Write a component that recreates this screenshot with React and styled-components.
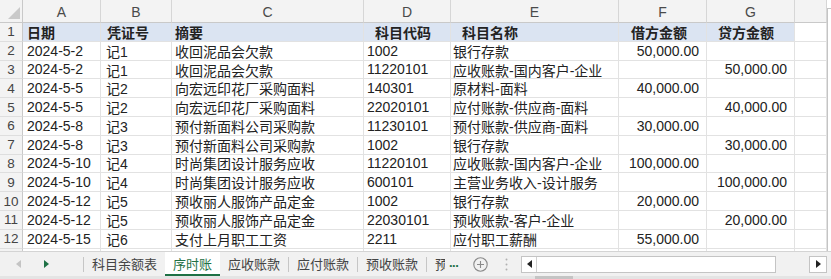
import React from "react";
import styled, { createGlobalStyle } from "styled-components";

const GlobalStyle = createGlobalStyle`
  html, body {
    margin: 0;
    padding: 0;
    background: #fff;
  }
  body {
    font-family: "Liberation Sans", "Noto Sans CJK SC", sans-serif;
    overflow: hidden;
  }
  * {
    box-sizing: border-box;
  }
`;

const COLS = ["A", "B", "C", "D", "E", "F", "G", ""];

const ROWS = [
  ["日期", "凭证号", "摘要", "科目代码", "科目名称", "借方金额", "贷方金额"],
  ["2024-5-2", "记1", "收回泥品会欠款", "1002", "银行存款", "50,000.00", ""],
  ["2024-5-2", "记1", "收回泥品会欠款", "11220101", "应收账款-国内客户-企业", "", "50,000.00"],
  ["2024-5-5", "记2", "向宏远印花厂采购面料", "140301", "原材料-面料", "40,000.00", ""],
  ["2024-5-5", "记2", "向宏远印花厂采购面料", "22020101", "应付账款-供应商-面料", "", "40,000.00"],
  ["2024-5-8", "记3", "预付新面料公司采购款", "11230101", "预付账款-供应商-面料", "30,000.00", ""],
  ["2024-5-8", "记3", "预付新面料公司采购款", "1002", "银行存款", "", "30,000.00"],
  ["2024-5-10", "记4", "时尚集团设计服务应收", "11220101", "应收账款-国内客户-企业", "100,000.00", ""],
  ["2024-5-10", "记4", "时尚集团设计服务应收", "600101", "主营业务收入-设计服务", "", "100,000.00"],
  ["2024-5-12", "记5", "预收丽人服饰产品定金", "1002", "银行存款", "20,000.00", ""],
  ["2024-5-12", "记5", "预收丽人服饰产品定金", "22030101", "预收账款-客户-企业", "", "20,000.00"],
  ["2024-5-15", "记6", "支付上月职工工资", "2211", "应付职工薪酬", "55,000.00", ""],
  ["", "", "", "", "", "", ""],
];

const HEAD_INDENT = [4, 6, 3, 11, 11, 12, 11];
const BODY_INDENT = [4, 5, 3, 3, 2];

// last tab is only partly visible in the strip
const TABS = ["科目余额表", "序时账", "应收账款", "应付账款", "预收账款", "预"];

const Sheet = styled.div`
  display: flex;
  flex-direction: column;
  width: 831px;
  height: 279px;
  overflow: hidden;
`;

const GridArea = styled.div`
  display: flex;
  height: 251px;
  overflow: hidden;
`;

const Grid = styled.div`
  display: grid;
  grid-template-columns: 23px 78px 71px 192px 87px 168px 88px 88px 32px;
  grid-template-rows: 23px;
  grid-auto-rows: 18.8px;
  width: 827px;
  align-content: start;
`;

const Corner = styled.div`
  display: flex;
  align-items: flex-end;
  justify-content: flex-end;
  padding: 0 2px 3px 0;
  background: #f3f3f3;
  border-right: 1px solid #c9c9c9;
  border-bottom: 1px solid #c9c9c9;
`;

const ColHead = styled.div`
  display: flex;
  align-items: center;
  justify-content: center;
  background: #f3f3f3;
  border-right: 1px solid #d6d6d6;
  border-bottom: 1px solid #c9c9c9;
  color: #4a4a4a;
  font-size: 14px;
  padding-top: 2px;
`;

const RowHead = styled.div`
  display: flex;
  align-items: center;
  justify-content: center;
  background: #f3f3f3;
  border-right: 1px solid #c9c9c9;
  border-bottom: 1px solid #dedede;
  color: #444;
  font-size: 13.5px;
`;

const Cell = styled.div`
  display: flex;
  align-items: center;
  justify-content: ${(p) => (p.$num ? "flex-end" : "flex-start")};
  padding: ${(p) => (p.$num ? "0 7px 0 0" : `0 0 0 ${p.$indent || 3}px`)};
  background: ${(p) => (p.$title ? "#dbe4f2" : "#fff")};
  border-right: 1px solid #e2e2e2;
  border-bottom: 1px solid #e2e2e2;
  color: #222;
  font-size: 14px;
  font-weight: ${(p) => (p.$title ? 700 : 400)};
  white-space: nowrap;
  overflow: hidden;
`;

const VScroll = styled.div`
  width: 4px;
  margin-top: 8px;
  border-left: 1px solid #c4c4c4;
  border-top: 1px solid #c4c4c4;
  background: #fff;
`;

const TabBar = styled.div`
  display: flex;
  align-items: center;
  height: 25px;
  background: #f1f1f1;
  border-top: 1px solid #d4d4d4;
  font-family: "Noto Sans CJK SC", sans-serif;
`;

const NavArea = styled.div`
  display: flex;
  align-items: center;
  gap: 23px;
  width: 83px;
  height: 100%;
  padding-left: 16px;
`;

const Sep = styled.div`
  width: 1px;
  height: 15px;
  background: #c6c6c6;
  flex-shrink: 0;
`;

const TabStrip = styled.div`
  display: flex;
  align-items: center;
  width: 361px;
  height: 100%;
  overflow: hidden;
  flex-shrink: 0;
`;

const Tab = styled.div`
  display: flex;
  align-items: center;
  height: 100%;
  padding: 0 8px;
  font-size: 13px;
  color: ${(p) => (p.$active ? "#1e7145" : "#444")};
  background: ${(p) => (p.$active ? "#fff" : "transparent")};
  border-bottom: 2px solid ${(p) => (p.$active ? "#1e7145" : "transparent")};
  white-space: nowrap;
  flex-shrink: 0;
`;

const More = styled.div`
  width: 14px;
  margin-left: 4px;
  color: #1e7145;
  font-family: "Liberation Sans", sans-serif;
  font-weight: 700;
  font-size: 13px;
  letter-spacing: -0.5px;
  line-height: 1;
  padding-bottom: 4px;
  white-space: nowrap;
`;

const AddButton = styled.div`
  display: flex;
  margin-left: 10px;
`;

const Grip = styled.div`
  display: flex;
  margin-left: 17px;
`;

const HScroll = styled.div`
  display: flex;
  width: 255px;
  height: 17px;
  margin-left: 13px;
  background: #fff;
  border: 1px solid #c4c4c4;
`;

const ScrollBtn = styled.div`
  display: flex;
  align-items: center;
  justify-content: center;
  width: ${(p) => p.$w || 15}px;
  height: ${(p) => p.$h || 15}px;
  background: #fff;
  border-right: ${(p) => (p.$line ? "1px solid #d0d0d0" : "none")};
`;

const EndButton = styled(ScrollBtn)`
  margin-left: 33px;
  border: 1px solid #c4c4c4;
`;

const BottomStrip = styled.div`
  height: 3px;
  background: #e4e4e4;
  padding-left: 535px;
`;

const Thumb = styled.div`
  width: 38px;
  height: 100%;
  background: #c4c4c4;
`;

const Tri = ({ dir, color }) => (
  <svg width="5" height="8" viewBox="0 0 5 8">
    <path d={dir === "left" ? "M5 0 L0 4 L5 8 Z" : "M0 0 L5 4 L0 8 Z"} fill={color} />
  </svg>
);

const App = () => {
  return (
    <>
      <GlobalStyle />
      <Sheet>
        <GridArea>
          <Grid>
            <Corner>
              <svg width="12" height="12" viewBox="0 0 12 12">
                <path d="M12 0 L12 12 L0 12 Z" fill="#c9c9c9" />
              </svg>
            </Corner>
            {COLS.map((c, i) => (
              <ColHead key={i}>{c}</ColHead>
            ))}
            {ROWS.map((row, r) => (
              <React.Fragment key={r}>
                <RowHead>{r < 12 ? r + 1 : ""}</RowHead>
                {row.map((v, c) => {
                  const title = r === 0;
                  const num = !title && c >= 5;
                  return (
                    <Cell
                      key={c}
                      $title={title}
                      $num={num}
                      $indent={title ? HEAD_INDENT[c] : BODY_INDENT[c]}
                    >
                      {v}
                    </Cell>
                  );
                })}
                <Cell />
              </React.Fragment>
            ))}
          </Grid>
          <VScroll />
        </GridArea>
        <TabBar>
          <NavArea>
            <Tri dir="left" color="#c4c4c4" />
            <Tri dir="right" color="#1e7145" />
          </NavArea>
          <Sep />
          <TabStrip>
            {TABS.map((t, i) => (
              <React.Fragment key={t}>
                {i > 2 && <Sep />}
                <Tab $active={i === 1}>{t}</Tab>
              </React.Fragment>
            ))}
          </TabStrip>
          <More>...</More>
          <AddButton>
            <svg width="15" height="15" viewBox="0 0 15 15">
              <circle cx="7.5" cy="7.5" r="6.7" fill="none" stroke="#8a8a8a" strokeWidth="1.1" />
              <path d="M7.5 4 V11 M4 7.5 H11" stroke="#8a8a8a" strokeWidth="1.1" />
            </svg>
          </AddButton>
          <Grip>
            <svg width="3" height="13" viewBox="0 0 3 13">
              <circle cx="1.5" cy="1.5" r="1" fill="#b0b0b0" />
              <circle cx="1.5" cy="6.5" r="1" fill="#b0b0b0" />
              <circle cx="1.5" cy="11.5" r="1" fill="#b0b0b0" />
            </svg>
          </Grip>
          <HScroll>
            <ScrollBtn $line>
              <Tri dir="left" color="#222" />
            </ScrollBtn>
          </HScroll>
          <EndButton $w={18} $h={17}>
            <Tri dir="right" color="#222" />
          </EndButton>
        </TabBar>
        <BottomStrip>
          <Thumb />
        </BottomStrip>
      </Sheet>
    </>
  );
};

export default App;
